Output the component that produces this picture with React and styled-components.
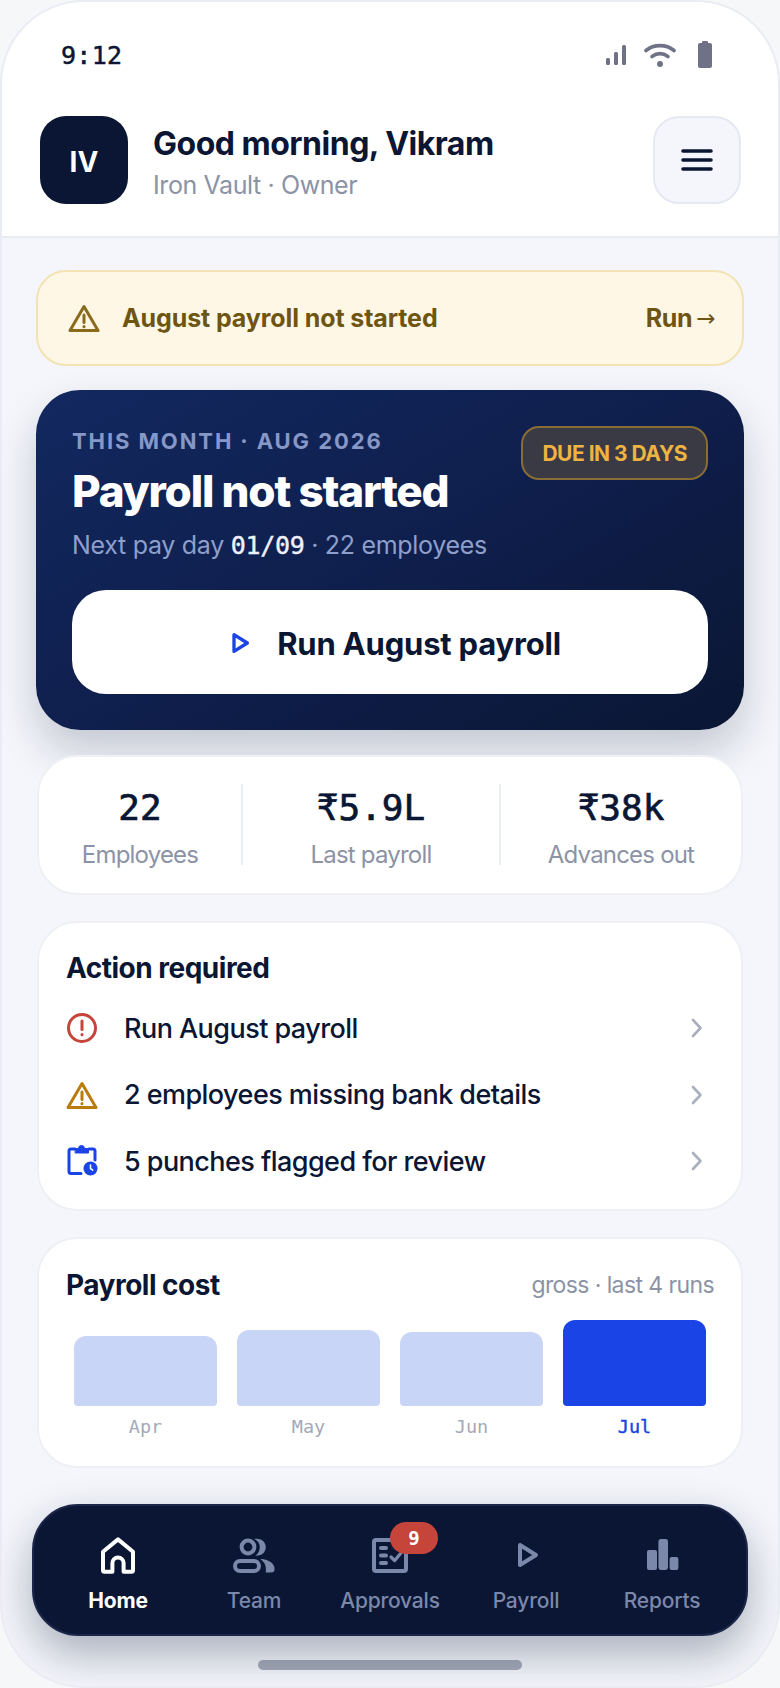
import React from 'react';
import styled, { createGlobalStyle } from 'styled-components';

const sans = `Inter, "Noto Sans", sans-serif`;
const mono = `"DejaVu Sans Mono", "Liberation Mono", monospace`;

const GlobalStyle = createGlobalStyle`
  html, body {
    margin: 0;
    padding: 0;
    background: #f6f7f9;
  }
  * {
    box-sizing: border-box;
  }
`;

const Phone = styled.div`
  width: 780px;
  height: 1688px;
  display: flex;
  flex-direction: column;
  overflow: hidden;
  background: #f4f6fb;
  border: 2px solid #e9ecf3;
  border-radius: 84px;
  font-family: ${sans};
  color: #0a1633;
`;

const Top = styled.header`
  background: #fff;
  border-bottom: 2px solid #e8ebf2;
  padding-bottom: 32px;
`;

const StatusBar = styled.div`
  height: 114px;
  padding: 0 65px 8px 59px;
  display: flex;
  align-items: center;
  justify-content: space-between;
`;

const Time = styled.span`
  font-family: ${mono};
  font-size: 25px;
  letter-spacing: 0.3px;
  -webkit-text-stroke: 0.5px currentColor;
`;

const StatusIcons = styled.div`
  display: flex;
  align-items: center;
  gap: 16px;
`;

const BatteryIcon = styled.svg`
  margin-left: 5px;
`;

const HeaderRow = styled.div`
  padding: 0 37px 0 38px;
  display: flex;
  align-items: center;
  gap: 25px;
`;

const Avatar = styled.div`
  width: 88px;
  height: 88px;
  padding-top: 4px;
  border-radius: 26px;
  background: #0a1633;
  color: #fff;
  display: flex;
  align-items: center;
  justify-content: center;
  font-size: 28px;
  font-weight: 700;
`;

const Greeting = styled.div`
  flex: 1;
  padding-top: 4px;
`;

const Hello = styled.div`
  font-size: 32px;
  line-height: 42px;
  font-weight: 700;
  letter-spacing: -0.5px;
`;

const Org = styled.div`
  margin-top: 4px;
  font-size: 25px;
  line-height: 32px;
  color: #8b93a5;
  letter-spacing: -0.4px;
`;

const MenuButton = styled.div`
  width: 88px;
  height: 88px;
  border-radius: 26px;
  background: #f4f6fb;
  border: 2px solid #e6e9f1;
  display: flex;
  align-items: center;
  justify-content: center;
`;

const Main = styled.main`
  flex: 1;
  padding: 32px 34px 0;
  display: flex;
  flex-direction: column;
  gap: 24px;
`;

const Alert = styled.div`
  height: 96px;
  padding: 0 27px 0 30px;
  display: flex;
  align-items: center;
  gap: 22px;
  background: #fef7e6;
  border: 2px solid #f2e2b4;
  border-radius: 30px;
  color: #6f5512;
  font-size: 25px;
  font-weight: 700;
  letter-spacing: -0.1px;
`;

const AlertText = styled.span`
  flex: 1;
`;

const RunLink = styled.span`
  display: flex;
  align-items: center;
  gap: 4px;
  letter-spacing: -0.4px;
`;

const Arrow = styled.span`
  font-family: "DejaVu Sans", sans-serif;
  font-size: 23px;
  font-weight: 400;
`;

const Hero = styled.section`
  height: 340px;
  padding: 36px;
  border-radius: 44px;
  background: linear-gradient(150deg, #12285f 0%, #0f1f4d 50%, #0a1633 100%);
  box-shadow: 0 22px 44px rgba(10, 22, 51, 0.2);
  display: flex;
  flex-direction: column;
`;

const HeroTop = styled.div`
  display: flex;
  justify-content: space-between;
  align-items: flex-start;
`;

const Eyebrow = styled.div`
  margin-top: 1px;
  font-size: 22px;
  line-height: 28px;
  font-weight: 700;
  letter-spacing: 1.9px;
  color: #8797c6;
`;

const HeroTitle = styled.div`
  margin-top: 8px;
  font-size: 44px;
  line-height: 56px;
  font-weight: 800;
  letter-spacing: -1.2px;
  color: #fff;
`;

const HeroSub = styled.div`
  margin-top: 9px;
  font-size: 25px;
  line-height: 34px;
  letter-spacing: -0.3px;
  color: #8f9fcb;
`;

const HeroDate = styled.span`
  font-family: ${mono};
  font-size: 25px;
  color: #eef1fa;
  -webkit-text-stroke: 0.4px currentColor;
`;

const DueBadge = styled.div`
  height: 54px;
  padding: 0 19px;
  display: flex;
  align-items: center;
  border-radius: 18px;
  border: 2px solid #8a6c35;
  background: #3a3a45;
  color: #efb342;
  font-size: 21px;
  font-weight: 700;
  letter-spacing: -0.5px;
`;

const RunButton = styled.div`
  margin-top: 27px;
  height: 104px;
  padding-top: 2px;
  border-radius: 34px;
  background: #fff;
  display: flex;
  align-items: center;
  justify-content: center;
  gap: 18px;
  font-size: 31px;
  font-weight: 700;
  letter-spacing: -0.2px;
`;

const Card = styled.section`
  background: #fff;
  border: 2px solid #eef0f5;
  border-radius: 40px;
  margin: 0 1px;
`;

const StatsCard = styled(Card)`
  height: 140px;
  margin-top: 1px;
  padding: 27px 0;
  display: grid;
  grid-template-columns: 202px 258px 1fr;
  grid-template-rows: 81px;
`;

const Stat = styled.div`
  padding-top: 2px;
  display: flex;
  flex-direction: column;
  align-items: center;
  border-left: ${({ $divided }) => ($divided ? '2px solid #e9ecf3' : 'none')};
`;

const StatValue = styled.div`
  font-family: ${mono};
  font-size: 36px;
  line-height: 44px;
  flex-shrink: 0;
  -webkit-text-stroke: 0.7px currentColor;
`;

const StatLabel = styled.div`
  margin-top: 10px;
  flex-shrink: 0;
  font-size: 24px;
  line-height: 30px;
  color: #8b93a5;
  letter-spacing: -0.8px;
`;

const ActionCard = styled(Card)`
  height: 290px;
  margin-top: 2px;
  padding: 28px 27px 0;
`;

const CardTitle = styled.div`
  font-size: 28px;
  line-height: 34px;
  font-weight: 700;
  letter-spacing: -0.5px;
`;

const ActionList = styled.div`
  margin-top: 10px;
`;

const ActionRow = styled.div`
  height: 66.5px;
  display: flex;
  align-items: center;
  gap: 26px;
  padding-right: 9px;
  font-size: 27px;
  font-weight: 500;
  letter-spacing: -0.55px;
`;

const ActionText = styled.span`
  flex: 1;
`;

const CostCard = styled(Card)`
  height: 231px;
  margin-top: 2px;
  padding: 29px 27px 0;
`;

const CostHead = styled.div`
  display: flex;
  align-items: center;
  justify-content: space-between;
`;

const CostNote = styled.span`
  font-size: 23px;
  color: #8b93a5;
  letter-spacing: -0.6px;
`;

const Chart = styled.div`
  margin-top: 18px;
  padding: 0 8px;
  display: grid;
  grid-template-columns: repeat(4, 1fr);
  gap: 20px;
`;

const BarColumn = styled.div`
  display: flex;
  flex-direction: column;
  align-items: stretch;
  text-align: center;
`;

const BarSlot = styled.div`
  height: 86px;
  display: flex;
  align-items: flex-end;
`;

const Bar = styled.div`
  width: 100%;
  border-radius: 12px 12px 4px 4px;
  background: ${({ $active }) => ($active ? '#1a44e6' : '#c9d5f7')};
`;

const BarLabel = styled.div`
  margin-top: 10px;
  font-family: ${mono};
  font-size: 18.5px;
  line-height: 22px;
  color: ${({ $active }) => ($active ? '#1a44e6' : '#a3a9b7')};
  -webkit-text-stroke: ${({ $active }) => ($active ? '0.4px currentColor' : '0')};
`;

const Nav = styled.nav`
  position: relative;
  z-index: 1;
  margin: 0 30px;
  height: 132px;
  padding: 0 16px;
  border-radius: 46px;
  border: 2px solid #1b2648;
  background: #0a1633;
  box-shadow: 0 18px 44px rgba(10, 22, 51, 0.32);
  display: grid;
  grid-template-columns: repeat(5, 1fr);
`;

const NavItem = styled.div`
  padding-top: 25px;
  display: flex;
  flex-direction: column;
  align-items: center;
  color: ${({ $active }) => ($active ? '#fff' : '#7b88aa')};
`;

const NavIconWrap = styled.div`
  position: relative;
  width: 48px;
  height: 48px;
`;

const NavBadge = styled.span`
  position: absolute;
  top: -9px;
  left: 24px;
  width: 48px;
  height: 32px;
  border-radius: 16px;
  background: #c5453a;
  color: #fff;
  display: flex;
  align-items: center;
  justify-content: center;
  font-family: ${mono};
  font-size: 19px;
  font-weight: 700;
`;

const NavLabel = styled.span`
  margin-top: 8px;
  font-size: 21px;
  line-height: 28px;
  font-weight: ${({ $active }) => ($active ? 700 : 500)};
  letter-spacing: -0.2px;
`;

const HomeBar = styled.div`
  align-self: center;
  width: 264px;
  height: 10px;
  margin: 24px 0 16px;
  border-radius: 5px;
  background: #a5aab8;
`;

const Warning = ({ color }) => (
  <svg width="32" height="32" viewBox="0 0 32 32" fill="none" stroke={color} strokeWidth="3" strokeLinejoin="round" strokeLinecap="round">
    <path d="M16 4.500 30 28.500H2Z" />
    <path d="M16 13v7.500" />
    <path d="M16 24.600v.200" />
  </svg>
);

const Chevron = () => (
  <svg width="16" height="20" viewBox="0 0 16 20" fill="none" stroke="#a9afbc" strokeWidth="2.600" strokeLinecap="round" strokeLinejoin="round">
    <path d="M4 2l7.500 8L4 18" />
  </svg>
);

const ActionIcons = {
  alert: (
    <svg width="32" height="32" viewBox="0 0 32 32" fill="none" stroke="#c5453a" strokeWidth="3" strokeLinecap="round">
      <circle cx="16" cy="16" r="13.500" />
      <path d="M16 9v8.500" />
      <path d="M16 22.600v.200" />
    </svg>
  ),
  warn: <Warning color="#b97c0d" />,
  clock: (
    <svg width="32" height="32" viewBox="0 0 32 32" fill="none" stroke="#1a44e6" strokeWidth="3" strokeLinecap="round" strokeLinejoin="round">
      <path d="M9 4H5a2 2 0 0 0-2 2v20.500a2 2 0 0 0 2 2H15" />
      <path d="M23 4h4a2 2 0 0 1 2 2v9" />
      <path d="M9.500 3.500h3a3 3 0 0 1 6 0h4v4.500h-13z" fill="#1a44e6" strokeWidth="1" />
      <circle cx="24.500" cy="23.500" r="7" fill="#1a44e6" stroke="none" />
      <path d="M24.500 20V23.500l2.200 1.600" stroke="#fff" strokeWidth="1.600" />
    </svg>
  ),
};

const PlayIcon = ({ color, size = 24, width = 2 }) => (
  <svg width={size} height={size} viewBox="0 0 24 24" fill="none" stroke={color} strokeWidth={width} strokeLinejoin="round">
    <path d="M9 7l8 5-8 5z" />
  </svg>
);

const NavIcons = {
  home: (
    <svg width="48" height="48" viewBox="0 0 24 24" fill="none" stroke="currentColor" strokeWidth="2" strokeLinejoin="round">
      <path d="M12 4.200 4.500 10.400V19.600a.8.8 0 0 0 .8.8H9.200V16a2.800 2.800 0 0 1 5.600 0v4.400h3.900a.8.8 0 0 0 .8-.8V10.400Z" />
    </svg>
  ),
  team: (
    <svg width="48" height="48" viewBox="0 0 24 24" fill="none" stroke="currentColor" strokeWidth="2">
      <circle cx="9" cy="8" r="3.200" />
      <rect x="2.500" y="15" width="12" height="5" rx="2.500" />
      <path d="M13.600 4.400c2.600.1 3.800 1.900 3.800 3.700s-1.200 3.500-3.400 3.700c1-1 1.400-2.400 1.400-3.700s-.5-2.700-1.800-3.700z" fill="currentColor" strokeWidth="1" />
      <path d="M16 14.300c3 .2 6 2.200 6 4.700 0 .9-.5 1.500-1.500 1.500h-2.300c.4-2.400-.4-4.600-2.200-6.200z" fill="currentColor" strokeWidth="0.600" />
    </svg>
  ),
  approvals: (
    <svg width="48" height="48" viewBox="0 0 24 24" fill="none" stroke="currentColor" strokeWidth="2" strokeLinecap="round" strokeLinejoin="round">
      <rect x="4" y="4.500" width="16" height="15.500" rx="1" />
      <path d="M7.500 8.500h2.500M7.500 12.300h2.500M7.500 16h2.500" />
      <path d="M12.500 13l1.800 1.800 3.200-3.800" strokeWidth="1.600" />
    </svg>
  ),
  payroll: <PlayIcon color="currentColor" size={48} />,
  reports: (
    <svg width="48" height="48" viewBox="0 0 24 24" fill="currentColor">
      <rect x="4.500" y="9.500" width="5" height="10" rx="1" />
      <rect x="10.200" y="4" width="4.800" height="15.500" rx="1.200" />
      <rect x="15.800" y="13" width="4.400" height="6.500" rx="1" />
    </svg>
  ),
};

const navItems = [
  { key: 'home', label: 'Home', active: true },
  { key: 'team', label: 'Team' },
  { key: 'approvals', label: 'Approvals', badge: 9 },
  { key: 'payroll', label: 'Payroll' },
  { key: 'reports', label: 'Reports' },
];

const actions = [
  { icon: 'alert', text: 'Run August payroll' },
  { icon: 'warn', text: '2 employees missing bank details' },
  { icon: 'clock', text: '5 punches flagged for review' },
];

const stats = [
  { value: '22', label: 'Employees' },
  { value: '₹5.9L', label: 'Last payroll' },
  { value: '₹38k', label: 'Advances out' },
];

const bars = [
  { month: 'Apr', height: 70 },
  { month: 'May', height: 76 },
  { month: 'Jun', height: 74 },
  { month: 'Jul', height: 86, active: true },
];

export default function App() {
  return (
    <>
      <GlobalStyle />
      <Phone>
        <Top>
          <StatusBar>
            <Time>9:12</Time>
            <StatusIcons>
              <svg width="24" height="24" viewBox="0 0 24 24" fill="#6f7286">
                <rect x="2" y="15" width="4" height="7" rx="1.500" />
                <rect x="10" y="9" width="4" height="13" rx="1.500" />
                <rect x="18" y="2" width="4" height="20" rx="1.500" />
              </svg>
              <svg width="32" height="28" viewBox="0 0 32 28" fill="none" stroke="#6f7286" strokeWidth="3.600" strokeLinecap="round">
                <path d="M2 9.500c8-6.500 20-6.500 28 0" />
                <path d="M8 15.500c5-3.500 11-3.500 16 0" />
                <circle cx="16" cy="23" r="2.200" fill="#6f7286" strokeWidth="1.500" />
              </svg>
              <BatteryIcon width="16" height="28" viewBox="0 0 16 28" fill="#6f7286">
                <rect x="5" y="0" width="6" height="4" rx="1" />
                <rect x="1" y="2" width="14" height="25" rx="2" />
              </BatteryIcon>
            </StatusIcons>
          </StatusBar>
          <HeaderRow>
            <Avatar>IV</Avatar>
            <Greeting>
              <Hello>Good morning, Vikram</Hello>
              <Org>Iron Vault · Owner</Org>
            </Greeting>
            <MenuButton>
              <svg width="32" height="24" viewBox="0 0 32 24" fill="none" stroke="#0a1633" strokeWidth="3.600" strokeLinecap="round">
                <path d="M2 3h28M2 12h28M2 21h28" />
              </svg>
            </MenuButton>
          </HeaderRow>
        </Top>

        <Main>
          <Alert>
            <Warning color="#8a6a1c" />
            <AlertText>August payroll not started</AlertText>
            <RunLink>
              Run<Arrow>→</Arrow>
            </RunLink>
          </Alert>

          <Hero>
            <HeroTop>
              <div>
                <Eyebrow>THIS MONTH · AUG 2026</Eyebrow>
                <HeroTitle>Payroll not started</HeroTitle>
              </div>
              <DueBadge>DUE IN 3 DAYS</DueBadge>
            </HeroTop>
            <HeroSub>
              Next pay day <HeroDate>01/09</HeroDate> · 22 employees
            </HeroSub>
            <RunButton>
              <PlayIcon color="#1a44e6" size={40} width={2} />
              Run August payroll
            </RunButton>
          </Hero>

          <StatsCard>
            {stats.map((stat, index) => (
              <Stat key={stat.label} $divided={index > 0}>
                <StatValue>{stat.value}</StatValue>
                <StatLabel>{stat.label}</StatLabel>
              </Stat>
            ))}
          </StatsCard>

          <ActionCard>
            <CardTitle>Action required</CardTitle>
            <ActionList>
              {actions.map((action) => (
                <ActionRow key={action.text}>
                  {ActionIcons[action.icon]}
                  <ActionText>{action.text}</ActionText>
                  <Chevron />
                </ActionRow>
              ))}
            </ActionList>
          </ActionCard>

          <CostCard>
            <CostHead>
              <CardTitle>Payroll cost</CardTitle>
              <CostNote>gross · last 4 runs</CostNote>
            </CostHead>
            <Chart>
              {bars.map((bar) => (
                <BarColumn key={bar.month}>
                  <BarSlot>
                    <Bar $active={bar.active} style={{ height: bar.height }} />
                  </BarSlot>
                  <BarLabel $active={bar.active}>{bar.month}</BarLabel>
                </BarColumn>
              ))}
            </Chart>
          </CostCard>
        </Main>

        <Nav>
          {navItems.map((item) => (
            <NavItem key={item.key} $active={item.active}>
              <NavIconWrap>
                {NavIcons[item.key]}
                {item.badge && <NavBadge>{item.badge}</NavBadge>}
              </NavIconWrap>
              <NavLabel $active={item.active}>{item.label}</NavLabel>
            </NavItem>
          ))}
        </Nav>
        <HomeBar />
      </Phone>
    </>
  );
}
